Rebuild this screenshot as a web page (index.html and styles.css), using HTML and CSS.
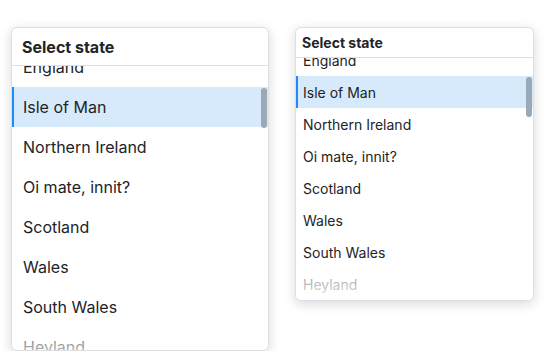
FILE: index.html
```html
<!DOCTYPE html>
<html>
<head>
<meta charset="utf-8">
<link rel="stylesheet" href="styles.css">
</head>
<body>
<div class="stage">
  <div class="card card-lg">
    <div class="card-head">Select state</div>
    <div class="list">
      <ul class="items">
        <li>England</li>
        <li class="active">Isle of Man</li>
        <li>Northern Ireland</li>
        <li>Oi mate, innit?</li>
        <li>Scotland</li>
        <li>Wales</li>
        <li>South Wales</li>
        <li>Heyland</li>
      </ul>
      <div class="fade"></div>
      <div class="thumb"></div>
    </div>
  </div>
  <div class="card card-sm">
    <div class="card-head">Select state</div>
    <div class="list">
      <ul class="items">
        <li>England</li>
        <li class="active">Isle of Man</li>
        <li>Northern Ireland</li>
        <li>Oi mate, innit?</li>
        <li>Scotland</li>
        <li>Wales</li>
        <li>South Wales</li>
        <li>Heyland</li>
      </ul>
      <div class="fade"></div>
      <div class="thumb"></div>
    </div>
  </div>
</div>
</body>
</html>
```

FILE: styles.css
```css
html, body {
  margin: 0;
  padding: 0;
  background: #ffffff;
  font-family: Inter, "Noto Sans", sans-serif;
  color: #222328;
  overflow: hidden;
}

.stage {
  display: flex;
  align-items: flex-start;
  gap: 26px;
  padding: 27px 0 0 11px;
}

.card {
  background: #fff;
  border: 1px solid #dedee3;
  border-radius: 6px;
  box-shadow: 0 3px 12px rgba(20, 20, 40, 0.16);
  overflow: hidden;
  box-sizing: border-box;
}

.card-head {
  font-weight: 700;
  border-bottom: 1px solid #dedee3;
  display: flex;
  align-items: center;
  box-sizing: border-box;
}

.list {
  position: relative;
  overflow: hidden;
}

.items {
  list-style: none;
  margin: 0;
  padding: 0;
}

.items li {
  display: flex;
  align-items: center;
  box-sizing: border-box;
  border-left: 2px solid transparent;
  white-space: nowrap;
}

.items li.active {
  background: #d6eafc;
  border-left-color: #1a8cff;
}

.fade {
  position: absolute;
  left: 0;
  right: 0;
  bottom: 0;
  background: linear-gradient(to bottom, rgba(255,255,255,0.5), rgba(255,255,255,0.9));
  pointer-events: none;
}

.thumb {
  position: absolute;
  right: 1px;
  width: 6px;
  border-radius: 3px;
  background: #9aa9b6;
}

/* large variant */
.card-lg { width: 258px; height: 324px; }
.card-lg .card-head {
  height: 38px;
  padding: 0 0 0 10px;
  font-size: 16px;
}
.card-lg .items { margin-top: -19px; }
.card-lg .items li {
  height: 40px;
  padding-left: 9px;
  font-size: 16px;
}
.card-lg .fade { height: 26px; }
.card-lg .thumb { top: 22px; height: 40px; }

/* small variant */
.card-sm { width: 239px; height: 274px; }
.card-sm .card-head {
  height: 30px;
  padding: 0 0 0 6px;
  font-size: 14px;
}
.card-sm .items { margin-top: -14px; }
.card-sm .items li {
  height: 32px;
  padding-left: 5px;
  font-size: 14px;
}
.card-sm .fade { height: 30px; }
.card-sm .thumb { top: 19px; height: 40px; }
```
